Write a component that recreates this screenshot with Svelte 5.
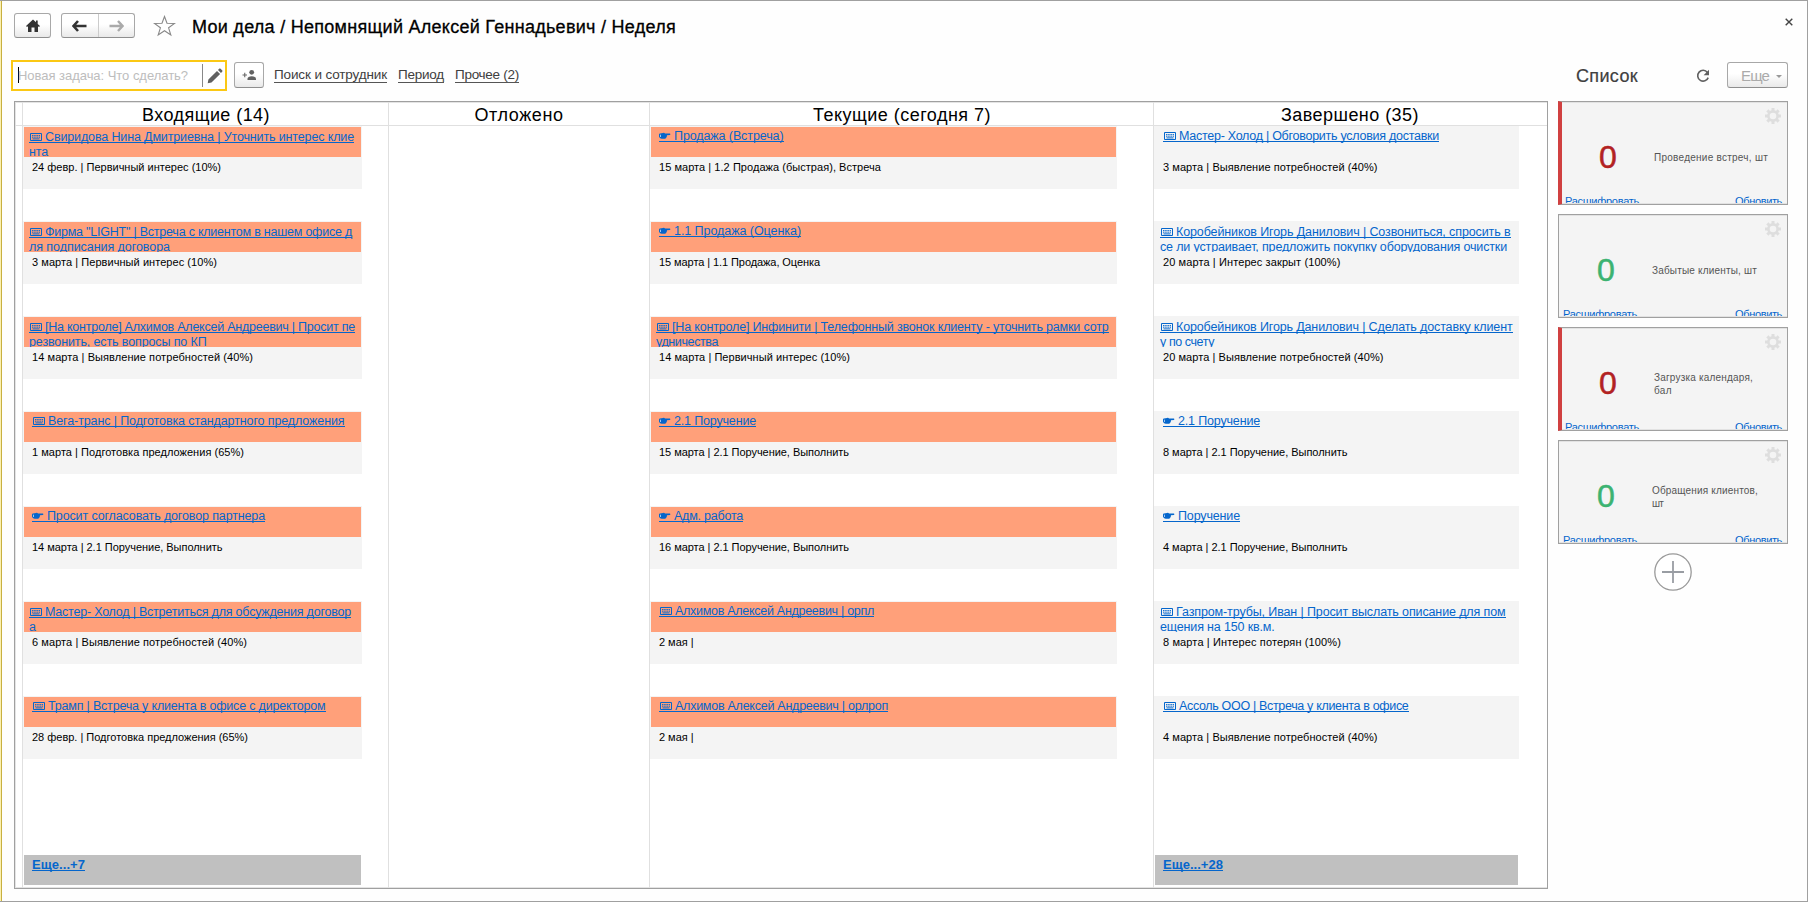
<script>
  // Spreads the letters of a label over the given width.
  function fit(node, width) {
    const natural = node.getBoundingClientRect().width;
    node.style.letterSpacing = (width - natural) / node.textContent.length + 'px';
  }

  const columns = [
    {
      title: 'Входящие (14)', titleWidth: 128, center: 184, cardWidth: 339, more: 'Еще...+7', moreWidth: 53,
      cards: [
        { late: 1, icon: 'kb', a: 'Свиридова Нина Дмитриевна | Уточнить интерес клие', aw: 309, b: 'нта', bw: 19, s: '24 февр. | Первичный интерес (10%)', sw: 189 },
        { late: 1, icon: 'kb', a: 'Фирма "LIGHT" | Встреча с клиентом в нашем офисе д', aw: 307, b: 'ля подписания договора', bw: 141, s: '3 марта | Первичный интерес (10%)', sw: 185 },
        { late: 1, icon: 'kb', a: '[На контроле] Алхимов Алексей Андреевич | Просит пе', aw: 310, b: 'резвонить, есть вопросы по КП', bw: 177.5, s: '14 марта | Выявление потребностей (40%)', sw: 221 },
        { late: 1, icon: 'kb', a: 'Вега-транс | Подготовка стандартного предложения', aw: 296.5, s: '1 марта | Подготовка предложения (65%)', sw: 212 },
        { late: 1, icon: 'hand', a: 'Просит согласовать договор партнера', aw: 218, s: '14 марта | 2.1 Поручение, Выполнить', sw: 190.5 },
        { late: 1, icon: 'kb', a: 'Мастер- Холод | Встретиться для обсуждения договор', aw: 306, b: 'а', bw: 7, s: '6 марта | Выявление потребностей (40%)', sw: 215 },
        { late: 1, icon: 'kb', a: 'Трамп | Встреча у клиента в офисе с директором', aw: 277.5, s: '28 февр. | Подготовка предложения (65%)', sw: 216 }
      ]
    },
    { title: 'Отложено', titleWidth: 89, center: 131, cardWidth: 0, cards: [] },
    {
      title: 'Текущие (сегодня 7)', titleWidth: 178, center: 253, cardWidth: 467,
      cards: [
        { late: 1, icon: 'hand', a: 'Продажа (Встреча)', aw: 109.5, s: '15 марта | 1.2 Продажа (быстрая), Встреча', sw: 222 },
        { late: 1, icon: 'hand', a: '1.1 Продажа (Оценка)', aw: 127, s: '15 марта | 1.1 Продажа, Оценка', sw: 161 },
        { late: 1, icon: 'kb', a: '[На контроле] Инфинити | Телефонный звонок клиенту - уточнить рамки сотр', aw: 436.5, b: 'удничества', bw: 62, s: '14 марта | Первичный интерес (10%)', sw: 191 },
        { late: 1, icon: 'hand', a: '2.1 Поручение', aw: 82, s: '15 марта | 2.1 Поручение, Выполнить', sw: 190 },
        { late: 1, icon: 'hand', a: 'Адм. работа', aw: 69, s: '16 марта | 2.1 Поручение, Выполнить', sw: 190 },
        { late: 1, icon: 'kb', a: 'Алхимов Алексей Андреевич | орпл', aw: 199, s: '2 мая |', sw: 34.5 },
        { late: 1, icon: 'kb', a: 'Алхимов Алексей Андреевич | орлроп', aw: 213, s: '2 мая |', sw: 34.5 }
      ]
    },
    {
      title: 'Завершено (35)', titleWidth: 138, center: 197, cardWidth: 365, more: 'Еще...+28', moreWidth: 60,
      cards: [
        { icon: 'kb', a: 'Мастер- Холод | Обговорить условия доставки', aw: 260, s: '3 марта | Выявление потребностей (40%)', sw: 214.5 },
        { icon: 'kb', a: 'Коробейников Игорь Данилович | Созвониться, спросить в', aw: 334.5, b: 'се ли устраивает, предложить покупку оборудования очистки', bw: 347, s: '20 марта | Интерес закрыт (100%)', sw: 177.5 },
        { icon: 'kb', a: 'Коробейников Игорь Данилович | Сделать доставку клиент', aw: 336.5, b: 'у по счету', bw: 54, s: '20 марта | Выявление потребностей (40%)', sw: 220.5 },
        { icon: 'hand', a: '2.1 Поручение', aw: 82, s: '8 марта | 2.1 Поручение, Выполнить', sw: 184.5 },
        { icon: 'hand', a: 'Поручение', aw: 62, s: '4 марта | 2.1 Поручение, Выполнить', sw: 184.5 },
        { icon: 'kb', a: 'Газпром-трубы, Иван | Просит выслать описание для пом', aw: 329.5, b: 'ещения на 150 кв.м.', bw: 114.5, s: '8 марта | Интерес потерян (100%)', sw: 178 },
        { icon: 'kb', a: 'Ассоль ООО | Встреча у клиента в офисе', aw: 229.5, s: '4 марта | Выявление потребностей (40%)', sw: 214.5 }
      ]
    }
  ];

  const widgets = [
    { bad: true, lines: [['Проведение встреч, шт', 114]] },
    { bad: false, lines: [['Забытые клиенты, шт', 105]] },
    { bad: true, lines: [['Загрузка календаря,', 99], ['бал', 18]] },
    { bad: false, lines: [['Обращения клиентов,', 106], ['шт', 11]] }
  ];
  const teeth = [0, 45, 90, 135, 180, 225, 270, 315];
</script>

<div class="window">
  <header>
    <button class="btn home" aria-label="Домой">
      <svg width="16" height="14" viewBox="0 0 16 14"><path d="M8 0.5 L1 7 L2 8 L3 7.3 V13 H6.5 V8.5 H9.5 V13 H13 V7.3 L14 8 L15 7 L12.7 4.9 V1.5 H11 V3.3 Z" fill="#333" /></svg>
    </button>
    <div class="btn nav">
      <span><svg width="15" height="12" viewBox="0 0 15 12"><path d="M6 1 L1.5 6 L6 11 M2 6 H14.5" fill="none" stroke="#333" stroke-width="2.6" /></svg></span>
      <span><svg width="15" height="12" viewBox="0 0 15 12"><path d="M9 1 L13.5 6 L9 11 M13 6 H0.5" fill="none" stroke="#aaa" stroke-width="2.4" /></svg></span>
    </div>
    <svg class="star" width="23" height="22" viewBox="0 0 23 22"><path d="M11.5 1.5 L14 8.3 L21.5 8.5 L15.6 12.8 L17.8 20 L11.5 15.7 L5.2 20 L7.4 12.8 L1.5 8.5 L9 8.3 Z" fill="#fff" stroke="#888" stroke-width="1.1" /></svg>
    <h1><span use:fit={484}>Мои дела / Непомнящий Алексей Геннадьевич / Неделя</span></h1>
    <svg class="close" width="8" height="8" viewBox="0 0 8 8"><path d="M0.7 0.7 L7.3 7.3 M7.3 0.7 L0.7 7.3" stroke="#444" stroke-width="1.4" /></svg>
  </header>

  <div class="toolbar">
    <div class="field">
      <i class="caret"></i>
      <span class="hint"><span use:fit={170}>Новая задача: Что сделать?</span></span>
      <i class="split"></i>
      <svg width="16" height="16" viewBox="0 0 16 16"><path d="M0.7 15.3 L1.4 11.5 L10 2.9 L13.1 6 L4.5 14.6 Z M11 1.9 L12.4 0.6 Q13 0.2 13.6 0.7 L15.3 2.4 Q15.8 3 15.3 3.6 L14 5 Z" fill="#606060" /></svg>
    </div>
    <button class="btn person" aria-label="Сотрудник">
      <svg width="15" height="12" viewBox="0 0 15 12"><path d="M0.5 6 H5 M2.75 3.75 V8.25" stroke="#666" stroke-width="1.1" /><circle cx="9.7" cy="3.3" r="2.4" fill="#606060" /><path d="M5.5 11 V9.7 Q5.8 7.4 9.7 7.2 Q13.7 7.4 14 9.7 V11 Z" fill="#606060" /></svg>
    </button>
    <a class="l1"><span use:fit={113}>Поиск и сотрудник</span></a>
    <a class="l2"><span use:fit={46}>Период</span></a>
    <a class="l3"><span use:fit={64}>Прочее (2)</span></a>
    <h2><span use:fit={62}>Список</span></h2>
    <svg class="refresh" width="14" height="14" viewBox="0 0 14 14"><path d="M11.4 3.4 A5.4 5.4 0 1 0 12.2 8.6" fill="none" stroke="#606060" stroke-width="1.6" /><path d="M13 0.8 V6.2 H7.6 Z" fill="#606060" /></svg>
    <button class="btn more-menu"><span use:fit={28}>Еще</span><i></i></button>
  </div>

  <main>
    <section class="board">
      <div class="gutter"><div class="head"></div></div>
      {#each columns as col}
        <div class="col">
          <div class="head"><div class="cap" style:width="{col.center * 2 - 2}px"><span use:fit={col.titleWidth}>{col.title}</span></div></div>
          {#each col.cards as card}
            <article style:width="{col.cardWidth}px">
              <div class="name" class:late={card.late} class:double={card.b}>
                <div class="line">
                  {#if card.icon === 'kb'}
                    <svg class="kb" width="12" height="8" viewBox="0 0 12 8"><path d="M.5 .5 H11.5 V7.5 H.5 Z" fill="none" stroke="currentColor" /><path d="M2 2.6 H10 M2 4.2 H10" stroke="currentColor" stroke-dasharray="1.5 .7" /><path d="M2.5 5.9 H9.5" stroke="currentColor" stroke-width="1" /></svg>
                  {:else}
                    <svg class="hand" width="12" height="8" viewBox="0 0 12 8"><path d="M0 2.4 Q0 1.5 1 1.5 L4 1 Q5.2 .2 6 1.4 L11 1.6 Q11.8 2.2 11 3 L7.8 3.2 Q8.4 4 7.7 4.4 Q8 5.2 7.2 5.5 Q7.2 6.6 6 6.7 H3.2 Q1.5 6.8 .8 5.8 Q0 5.6 0 4.6 Z" fill="currentColor" /><path d="M1.5 2.7 V5" stroke="#fff" stroke-width=".9" opacity=".7" /></svg>
                  {/if}
                  <span use:fit={card.aw}>{card.a}</span>
                </div>
                {#if card.b}<div class="rest"><span use:fit={card.bw}>{card.b}</span></div>{/if}
              </div>
              <div class="sub"><span use:fit={card.sw}>{card.s}</span></div>
            </article>
          {/each}
          {#if col.more}
            <div class="more" style:width="{col.cardWidth - 2}px"><span use:fit={col.moreWidth}>{col.more}</span></div>
          {/if}
        </div>
      {/each}
    </section>

    <aside>
      {#each widgets as w}
        <div class="widget" class:bad={w.bad}>
          <div class="value">0</div>
          <div class="label">
            {#each w.lines as [text, width]}<div><span use:fit={width}>{text}</span></div>{/each}
          </div>
          <svg class="gear" width="16" height="16" viewBox="-8 -8 16 16">
            <circle r="4.6" fill="none" stroke="#dedede" stroke-width="2.6" />
            {#each teeth as t}<rect x="-1.5" y="-8" width="3" height="3" fill="#dedede" transform="rotate({t})" />{/each}
          </svg>
          <div class="links"><span use:fit={74}>Расшифровать</span><span use:fit={47}>Обновить</span></div>
        </div>
      {/each}
      <svg class="add" width="38" height="38" viewBox="0 0 38 38"><circle cx="19" cy="19" r="18.2" fill="#fff" stroke="#999" stroke-width="1.3" /><path d="M8 19 H30 M19 8 V30" stroke="#999da3" stroke-width="1.8" /></svg>
    </aside>
  </main>
</div>

<style>
  :global(body) { margin: 0; background: #fff; }
  .window {
    width: 1808px; height: 902px; box-sizing: border-box; overflow: hidden;
    border: 1px solid #a0a0a0; border-left: 0; background: #fefefe;
    box-shadow: inset 1px 0 #fbf0b0, inset 2px 0 #c8b040;
    font-family: "Liberation Sans", Arial, sans-serif; color: #000;
  }
  span { white-space: pre; }
  h1, h2 { margin: 0; font-weight: 400; font-size: 18px; white-space: nowrap; }
  header { display: flex; height: 58px; padding-left: 14px; align-items: flex-start; }
  .btn {
    box-sizing: border-box; border: 1px solid #a8a8a8; border-bottom-color: #8e8e8e; border-radius: 3px; padding: 0;
    background: linear-gradient(#fff, #fff 45%, #e9e9e9); display: flex; align-items: center; justify-content: center;
    font-family: inherit;
  }
  .home { width: 37px; height: 25px; margin-top: 12px; }
  .nav { width: 74px; height: 25px; margin: 12px 0 0 10px; }
  .nav span { flex: 1; height: 23px; display: flex; align-items: center; justify-content: center; }
  .nav span + span { border-left: 1px solid #ccc; }
  .star { margin: 14px 0 0 18px; }
  h1 { margin: 14px 0 0 16px; line-height: 24px; -webkit-text-stroke: .3px #000; }
  .close { margin: 17px 14px 0 auto; }

  .toolbar { display: flex; height: 42px; align-items: flex-start; padding-left: 11px; color: #404040; font-size: 13.5px; }
  .field { width: 216px; height: 31px; box-sizing: border-box; margin-top: 1px; border: 2px solid #fbc814; background: #fff; display: flex; align-items: center; padding-left: 5px; }
  .caret { width: 1px; height: 16px; background: #000; margin-top: -2px; }
  .hint { width: 184px; color: #bdbdbd; font-size: 13px; line-height: 20px; margin: 0 0 0 -1px; }
  .split { width: 1px; height: 23px; background: #888; margin-right: 4px; }
  .person { width: 30px; height: 26px; margin: 3px 0 0 7px; }
  .toolbar a { margin-top: 6px; height: 18px; line-height: 20px; box-sizing: border-box; border-bottom: 1px solid #555; }
  .toolbar a span { display: inline-block; }
  .l1 { width: 113px; margin-left: 10px; }
  .l2 { width: 46px; margin-left: 11px; }
  .l3 { width: 64px; margin-left: 11px; }
  h2 { margin: 5px 0 0 1057px; width: 120px; line-height: 24px; -webkit-text-stroke: .2px #404040; }
  .refresh { margin-top: 10px; }
  .more-menu { width: 61px; height: 26px; margin: 3px 0 0 17px; font-size: 15px; color: #aaa; justify-content: flex-start; padding-left: 13px; }
  .more-menu i { border: 3px solid transparent; border-top-color: #999; border-bottom: 0; margin-left: 7px; margin-top: 2px; }

  main { display: flex; padding-left: 14px; }
  .board {
    width: 1534px; height: 788px; box-sizing: border-box; border: 1px solid #a0a0a0; background: #fff; box-shadow: inset 1px 1px #e4e4e4, inset 0 -1px #e4e4e4;
    display: grid; grid-template-columns: 7px 366px 261px 504px 394px;
  }
  .col { border-left: 1px solid #e0e0e0; }
  .head { height: 24px; box-sizing: border-box; border-bottom: 1px solid #e0e0e0; font-size: 18px; line-height: 26px; }
  .cap { text-align: center; }
  article { height: 63px; margin-bottom: 32px; background: #f4f4f4; overflow: hidden; }
  .name { height: 30px; margin: 1px 1px 0; overflow: hidden; padding-left: 8px; box-sizing: border-box; color: #0566cc; font-size: 12.5px; }
  .late { background: #ffa07a; }
  .double { padding-left: 5px; }
  .line { display: inline-flex; vertical-align: top; height: 15px; box-sizing: border-box; border-bottom: 1px solid #0566cc; line-height: 18px; }
  .double .line { height: 16px; line-height: 20px; }
  .line svg { margin: 5px 3px 0 1px; flex: none; }
  .double .line svg { margin-top: 6px; }
  .line .hand { margin-left: 0; }
  .rest { line-height: 18px; }
  .sub { padding-left: 9px; font-size: 11px; line-height: 20px; }
  .more { height: 30px; box-sizing: border-box; margin: 96px 0 0 1px; padding-left: 8px; background: #c0c0c0; font-weight: 700; font-size: 13px; color: #0566cc; line-height: 19px; }
  .more span { display: inline-block; height: 16px; box-sizing: border-box; border-bottom: 1px solid #0566cc; vertical-align: top; }

  aside { width: 230px; margin-left: 10px; display: flex; flex-direction: column; gap: 9px; }
  .widget {
    height: 104px; box-sizing: border-box; border: 1px solid #a0a0a0; background: #f4f4f4; box-shadow: inset 0 1px #e2e2e2, inset 0 -1px #e2e2e2;
    display: grid; grid-template-columns: 93px minmax(0, 1fr) 24px; grid-template-rows: 94px 7px; padding-bottom: 1px;
  }
  .widget.bad { border-left: 4px solid #d04040; grid-template-columns: 92px minmax(0, 1fr) 24px; }
  .value { font-size: 32px; line-height: 34px; color: #3cb371; padding: 38px 0 0 38px; -webkit-text-stroke: .5px; }
  .bad .value { color: #b22222; padding-left: 37px; }
  .label { font-size: 10px; line-height: 13px; color: #555; align-self: center; padding-top: 17px; }
  .gear { margin: 6px 0 0 2px; }
  .links { grid-column: 1 / -1; display: flex; justify-content: space-between; align-items: flex-start; height: 7px; overflow: hidden; line-height: 11px; font-size: 11px; color: #0566cc; padding: 0 5px 0 4px; }
  .bad .links { padding-left: 3px; }
  .add { align-self: center; }
</style>
